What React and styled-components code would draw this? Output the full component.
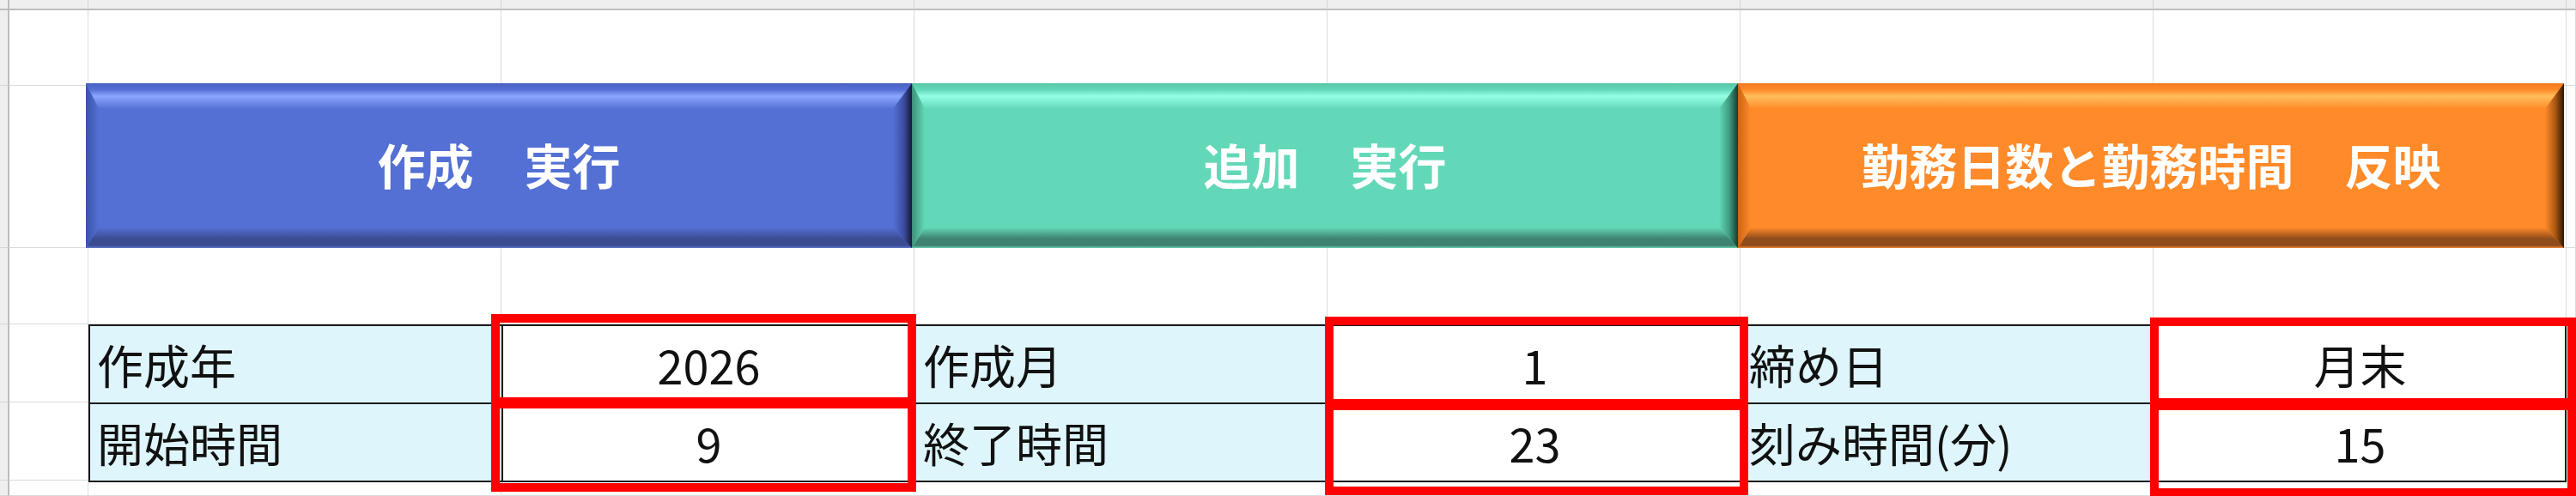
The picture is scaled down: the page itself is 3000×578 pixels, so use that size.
import React from "react";
import styled, { createGlobalStyle, css } from "styled-components";

const GlobalStyle = createGlobalStyle`
  html, body {
    margin: 0;
    padding: 0;
    background: #ffffff;
    overflow: hidden;
  }
  body {
    font-family: "Noto Sans CJK JP", "Noto Sans", sans-serif;
  }
`;

const GRID = "#dcdcdc";
const HEAD = "#efefef";
const HEAD_LINE = "#bdbdbd";

const Sheet = styled.div`
  position: relative;
  width: 3000px;
  height: 578px;
  overflow: hidden;
  display: grid;
  grid-template-columns: 11px 92px repeat(6, 481px) 11px;
  grid-template-rows: 12px 88px 189px 89px 91px 91px 18px;
`;

const Cell = styled.div`
  box-sizing: border-box;
  grid-row: ${(p) => p.$row};
  grid-column: ${(p) => p.$col};
  border-right: 1px solid ${GRID};
  border-bottom: 1px solid ${GRID};
  background: #fff;
  ${(p) =>
    p.$head &&
    css`
      background: ${HEAD};
      border-bottom: 2px solid ${HEAD_LINE};
      border-right: 1px solid #d6d6d6;
    `}
  ${(p) =>
    p.$side &&
    css`
      background: ${HEAD};
      border-right: 2px solid ${HEAD_LINE};
      border-bottom: 1px solid #d6d6d6;
    `}
  ${(p) =>
    p.$corner &&
    css`
      background: ${HEAD};
      border-right: 2px solid ${HEAD_LINE};
      border-bottom: 2px solid ${HEAD_LINE};
    `}
`;

const ButtonBar = styled.div`
  grid-row: 3;
  grid-column: 3 / span 6;
  align-self: start;
  display: flex;
  margin: -3px 0 0 -3px;
  height: 192px;
  z-index: 2;
`;

const palettes = {
  blue: {
    face: "#5470d4",
    hi: "#8aa6ff",
    topEdge: "#4a61c2",
    bottom: "#3b4c92",
    bottomEdge: "#6278cf",
    right: "#3d4fa3",
    rightEdge: "#141a38",
    left: "#3c52aa",
  },
  green: {
    face: "#63d8b8",
    hi: "#94ffe3",
    topEdge: "#58c6a6",
    bottom: "#3f8271",
    bottomEdge: "#6ad2b4",
    right: "#3e9a81",
    rightEdge: "#163a31",
    left: "#3d8f79",
  },
  orange: {
    face: "#ff8a29",
    hi: "#ffbd5c",
    topEdge: "#f07a1e",
    bottom: "#8f4c1c",
    bottomEdge: "#f08a3a",
    right: "#a85712",
    rightEdge: "#2e1603",
    left: "#c9661a",
  },
};

const BevelButton = styled.button`
  position: relative;
  flex: 0 0 962px;
  height: 192px;
  margin: 0;
  padding: 0;
  border: none;
  background: ${(p) => palettes[p.$tone].face};
  color: #ffffff;
  font-family: "Noto Sans CJK JP", "Noto Sans", sans-serif;
  font-weight: 700;
  font-size: 56px;
  display: flex;
  align-items: center;
  justify-content: center;
  cursor: pointer;
  overflow: hidden;
`;

const Facet = styled.span`
  position: absolute;
  pointer-events: none;
  ${(p) => {
    const c = palettes[p.$tone];
    switch (p.$side) {
      case "top":
        return css`
          top: 0;
          left: 0;
          right: 0;
          height: 30px;
          clip-path: polygon(0 0, 100% 0, calc(100% - 22px) 100%, 15px 100%);
          background: linear-gradient(
            180deg,
            ${c.topEdge} 0%,
            ${c.face} 25%,
            ${c.hi} 50%,
            ${c.face} 100%
          );
        `;
      case "bottom":
        return css`
          bottom: 0;
          left: 0;
          right: 0;
          height: 24px;
          clip-path: polygon(15px 0, calc(100% - 22px) 0, 100% 100%, 0 100%);
          background: linear-gradient(
            180deg,
            ${c.face} 0%,
            ${c.bottom} 55%,
            ${c.bottom} 88%,
            ${c.bottomEdge} 100%
          );
        `;
      case "right":
        return css`
          top: 0;
          bottom: 0;
          right: 0;
          width: 22px;
          clip-path: polygon(0 30px, 100% 0, 100% 100%, 0 calc(100% - 24px));
          background: linear-gradient(
            90deg,
            ${c.face} 0%,
            ${c.right} 55%,
            ${c.rightEdge} 100%
          );
        `;
      default:
        return css`
          top: 0;
          bottom: 0;
          left: 0;
          width: 15px;
          clip-path: polygon(0 0, 100% 30px, 100% calc(100% - 24px), 0 100%);
          background: linear-gradient(90deg, ${c.left} 0%, ${c.face} 100%);
        `;
    }
  }}
`;

const ButtonLabel = styled.span`
  position: relative;
  z-index: 1;
  white-space: pre;
  line-height: 1;
  margin-top: -4px;
`;

const WideSpace = styled.span`
  letter-spacing: 3px;
`;

const InfoTable = styled.div`
  grid-row: 5 / span 2;
  grid-column: 3 / span 6;
  align-self: start;
  display: grid;
  grid-template-columns: repeat(6, 481px);
  grid-template-rows: 91px 93px;
  z-index: 1;
`;

const TableCell = styled.div`
  position: relative;
  box-sizing: border-box;
  display: flex;
  align-items: center;
  border-top: 2px solid #1a1a1a;
  border-left: 2px solid #1a1a1a;
  ${(p) => p.$last && css`border-right: 2px solid #1a1a1a;`}
  ${(p) => p.$bottom && css`border-bottom: 2px solid #1a1a1a;`}
  background: ${(p) => (p.$label ? "#ddf5fb" : "#ffffff")};
  justify-content: ${(p) => (p.$label ? "flex-start" : "center")};
  padding-left: ${(p) => (p.$label ? "8px" : "0")};
  font-family: "Noto Sans CJK JP", "Noto Sans", sans-serif;
  font-size: 54px;
  font-weight: 400;
  color: #111111;
  line-height: 1;
  white-space: nowrap;
`;

const RedMark = styled.span`
  position: absolute;
  box-sizing: border-box;
  border: 10px solid #ff0000;
  pointer-events: none;
  z-index: 3;
`;

const rows = [
  [
    { label: "作成年", value: "2026" },
    { label: "作成月", value: "1" },
    { label: "締め日", value: "月末" },
  ],
  [
    { label: "開始時間", value: "9" },
    { label: "終了時間", value: "23" },
    { label: "刻み時間(分)", value: "15" },
  ],
];

// hand-drawn red frames around the value cells: [top, right, bottom, left]
const marks = [
  [
    [-14, -2, -4, -14],
    [-11, -9, -6, -5],
    [-10, -13, -5, -6],
  ],
  [
    [-5, -2, -13, -14],
    [-3, -9, -17, -5],
    [-3, -13, -19, -6],
  ],
];

const buttons = [
  { tone: "blue", parts: ["作成", "実行"] },
  { tone: "green", parts: ["追加", "実行"] },
  { tone: "orange", parts: ["勤務日数と勤務時間", "反映"] },
];

export default function App() {
  const bg = [];
  for (let r = 1; r <= 7; r++) {
    for (let c = 1; c <= 9; c++) {
      bg.push(
        <Cell
          key={`${r}-${c}`}
          $row={r}
          $col={c}
          $corner={r === 1 && c === 1}
          $head={r === 1 && c > 1}
          $side={c === 1 && r > 1}
        />
      );
    }
  }

  return (
    <>
      <GlobalStyle />
      <Sheet>
        {bg}
        <ButtonBar>
          {buttons.map((b) => (
            <BevelButton key={b.tone} $tone={b.tone} type="button">
              <Facet $tone={b.tone} $side="top" />
              <Facet $tone={b.tone} $side="bottom" />
              <Facet $tone={b.tone} $side="left" />
              <Facet $tone={b.tone} $side="right" />
              <ButtonLabel>
                {b.parts[0]}
                <WideSpace>　</WideSpace>
                {b.parts[1]}
              </ButtonLabel>
            </BevelButton>
          ))}
        </ButtonBar>
        <InfoTable>
          {rows.map((row, ri) =>
            row.map((item, ii) => {
              const m = marks[ri][ii];
              return (
                <React.Fragment key={`${ri}-${ii}`}>
                  <TableCell $label $bottom={ri === 1}>
                    {item.label}
                  </TableCell>
                  <TableCell $bottom={ri === 1} $last={ii === 2}>
                    {item.value}
                    <RedMark
                      style={{
                        top: m[0],
                        right: m[1],
                        bottom: m[2],
                        left: m[3],
                      }}
                    />
                  </TableCell>
                </React.Fragment>
              );
            })
          )}
        </InfoTable>
      </Sheet>
    </>
  );
}
